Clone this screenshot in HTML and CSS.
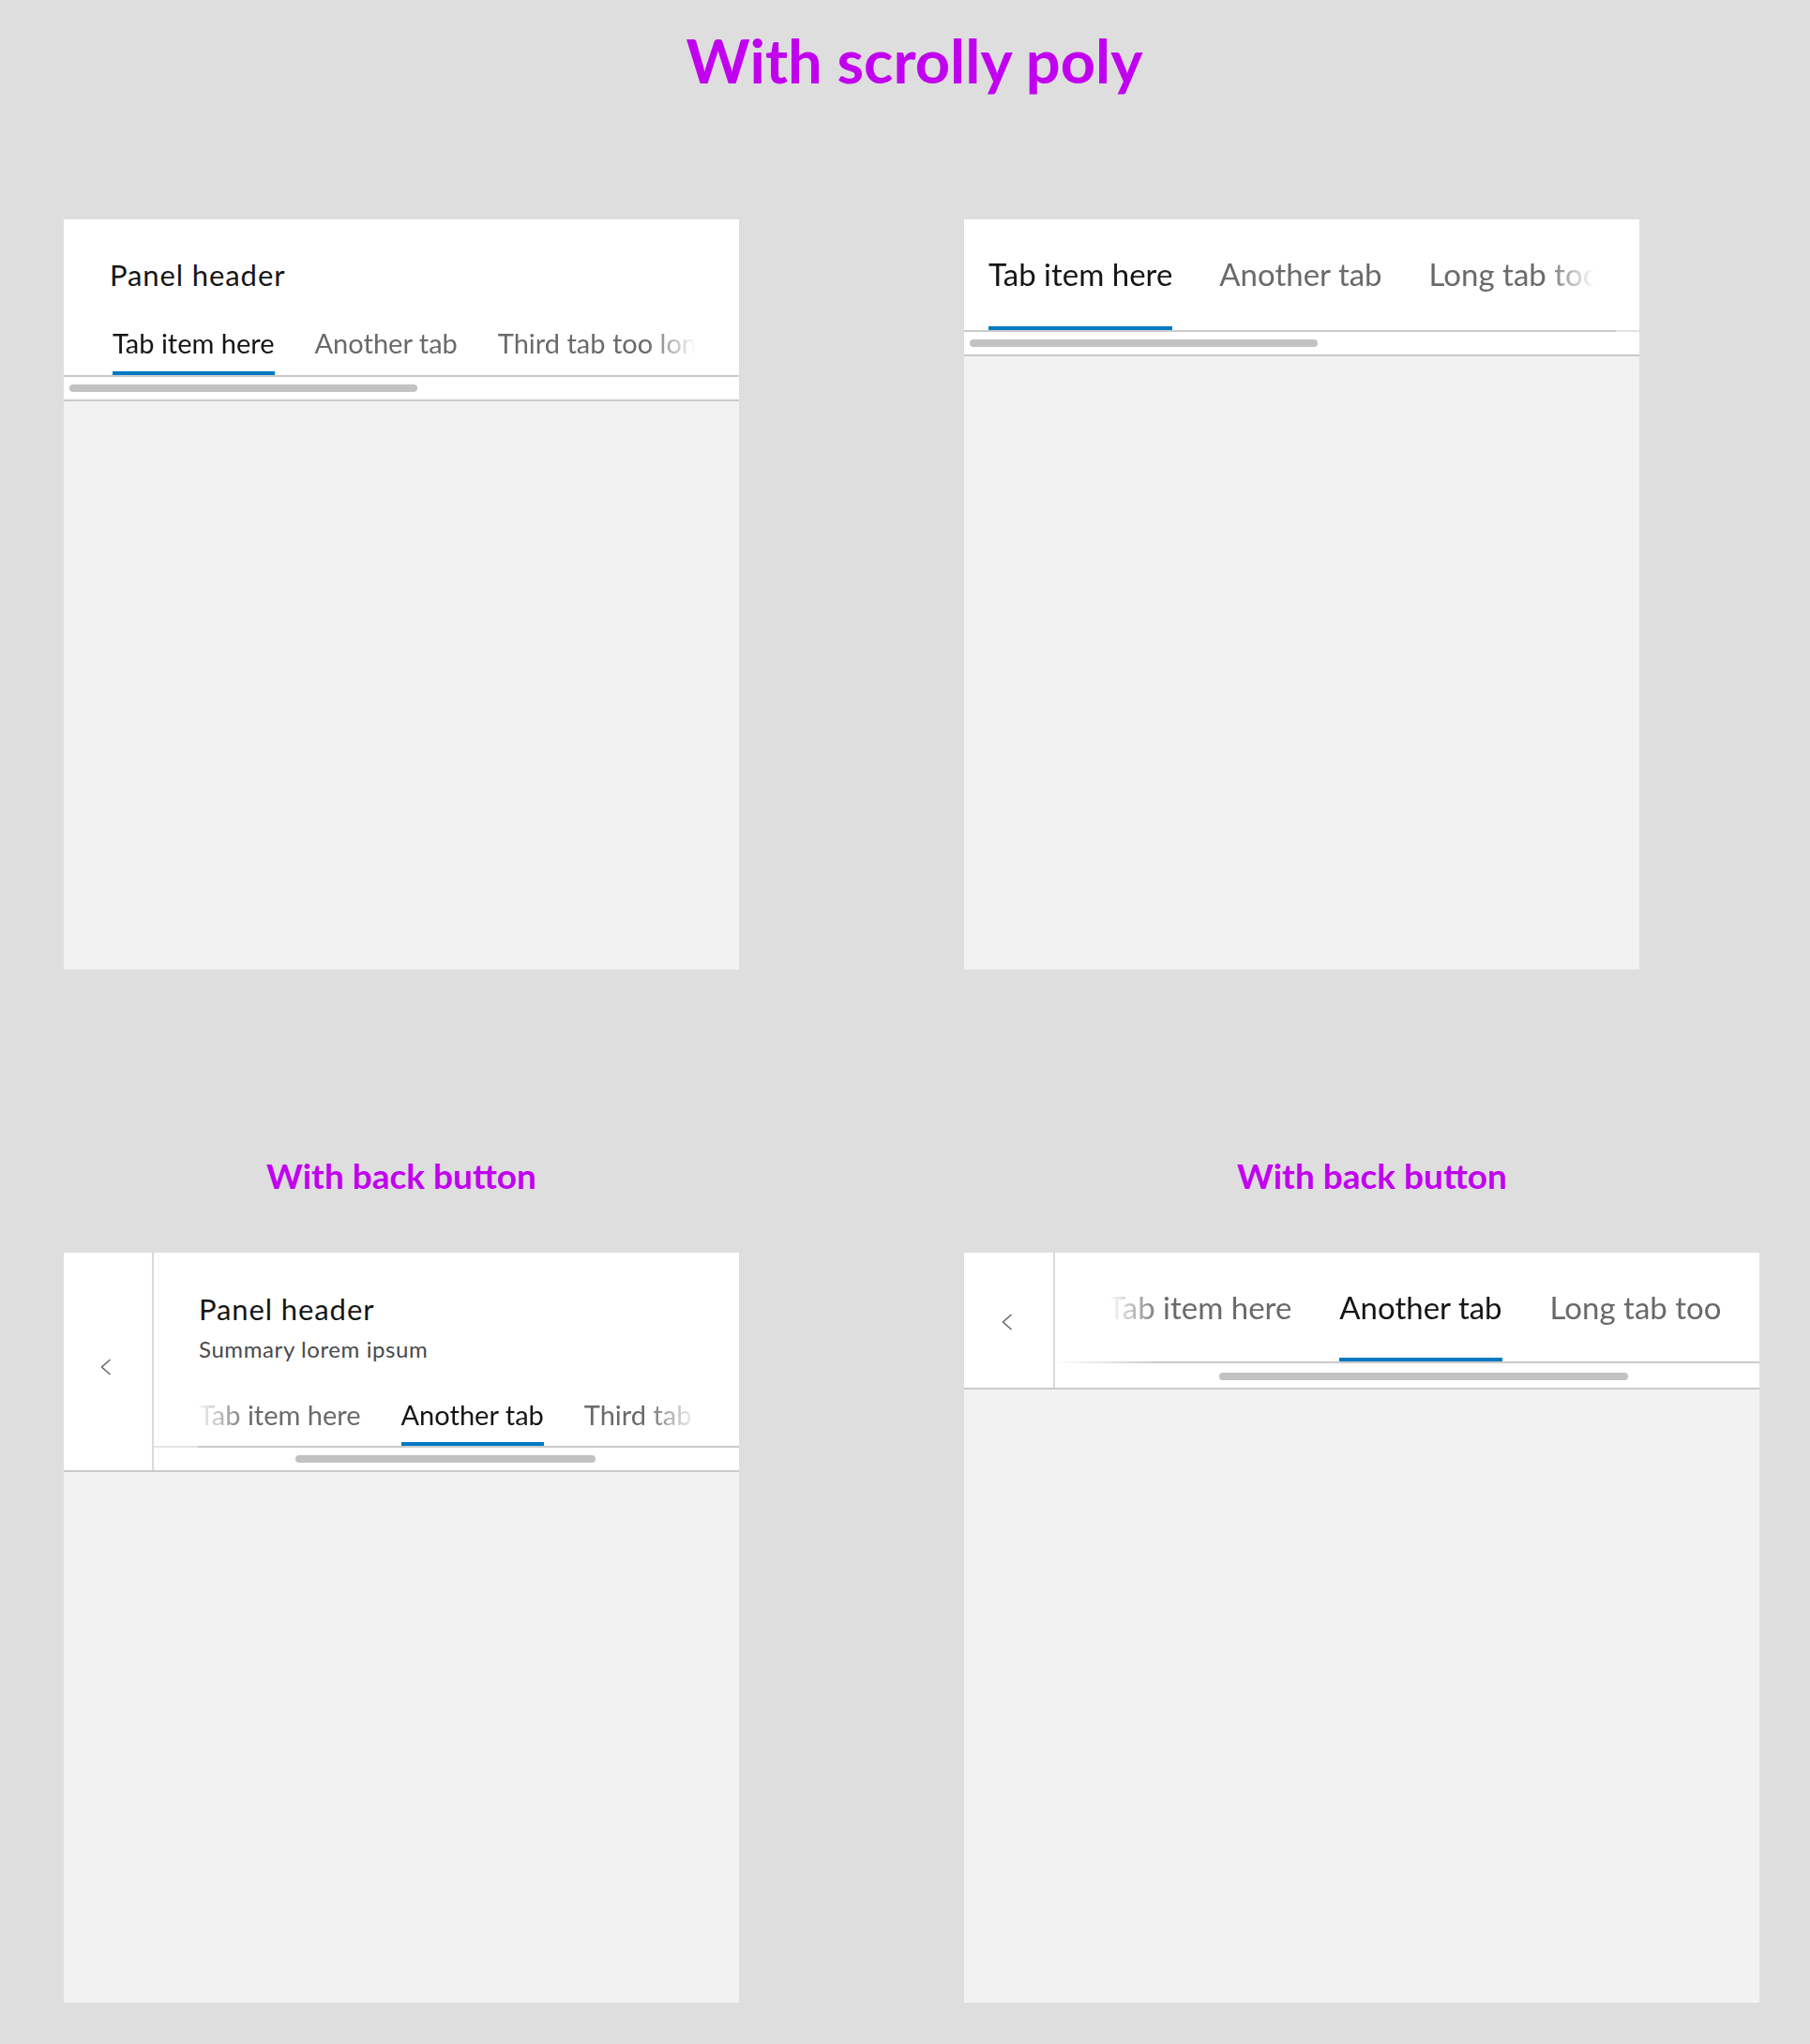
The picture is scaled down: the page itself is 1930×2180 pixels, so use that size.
FILE: index.html
```html
<!DOCTYPE html>
<html lang="en">
<head>
<meta charset="utf-8">
<title>With scrolly poly</title>
<link rel="stylesheet" href="styles.css">
</head>
<body>
<div class="page">
  <h1 class="title">With scrolly poly</h1>
  <div class="grid">
    <div class="cell">
      <div class="panel">
        <div class="panel-head">
          <div class="head-main">
            <div class="heading heading-a">Panel header</div>
            <div class="tabrow tabrow-a">
              <div class="tabs tabs-a">
                <div class="tab tab-sm active">Tab item here</div>
                <div class="tab tab-sm">Another tab</div>
                <div class="tab tab-sm">Third tab too long</div>
              </div>
            </div>
            <div class="scrollbar"><div class="thumb thumb-a"></div></div>
          </div>
        </div>
        <div class="panel-body"></div>
      </div>
    </div>
    <div class="cell">
      <div class="panel">
        <div class="panel-head">
          <div class="head-main">
            <div class="tabrow tabrow-b">
              <div class="tabs tabs-b">
                <div class="tab tab-lg tab-b active">Tab item here</div>
                <div class="tab tab-lg tab-b">Another tab</div>
                <div class="tab tab-lg tab-b">Long tab too</div>
              </div>
            </div>
            <div class="scrollbar"><div class="thumb thumb-a"></div></div>
          </div>
        </div>
        <div class="panel-body"></div>
      </div>
    </div>
    <div class="cell">
      <h2 class="subtitle">With back button</h2>
      <div class="panel">
        <div class="panel-head">
          <div class="back back-c">
            <svg class="chev" width="16" height="18" viewBox="0 0 16 18"><polyline points="10.5,1 1.5,9 10.5,17" fill="none" stroke="#6a6a6a" stroke-width="1.6"/></svg>
          </div>
          <div class="head-main">
            <div class="heading heading-c">Panel header</div>
            <div class="summary">Summary lorem ipsum</div>
            <div class="tabrow tabrow-c">
              <div class="tabs tabs-c">
                <div class="tab tab-sm tab-c">Tab item here</div>
                <div class="tab tab-sm tab-c active">Another tab</div>
                <div class="tab tab-sm tab-c">Third tab too long</div>
              </div>
            </div>
            <div class="scrollbar"><div class="thumb thumb-c"></div></div>
          </div>
        </div>
        <div class="panel-body"></div>
      </div>
    </div>
    <div class="cell">
      <h2 class="subtitle subtitle-shift">With back button</h2>
      <div class="panel panel-wide">
        <div class="panel-head">
          <div class="back back-d">
            <svg class="chev" width="16" height="18" viewBox="0 0 16 18"><polyline points="10.5,1 1.5,9 10.5,17" fill="none" stroke="#6a6a6a" stroke-width="1.6"/></svg>
          </div>
          <div class="head-main">
            <div class="tabrow tabrow-d">
              <div class="tabs tabs-d">
                <div class="tab tab-lg tab-d">Tab item here</div>
                <div class="tab tab-lg tab-d active">Another tab</div>
                <div class="tab tab-lg tab-d">Long tab too</div>
              </div>
            </div>
            <div class="scrollbar scrollbar-d"><div class="thumb thumb-d"></div></div>
          </div>
        </div>
        <div class="panel-body"></div>
      </div>
    </div>
  </div>
</div>
</body>
</html>
```
FILE: styles.css
```css
* { box-sizing: border-box; }
html, body { margin: 0; padding: 0; }
body {
  background: #dedede;
  font-family: Lato, "Noto Sans", sans-serif;
  width: 1930px;
  height: 2180px;
  overflow: hidden;
}
.page { padding: 24px 48px 0 68px; }
.title {
  margin: 0;
  font-size: 65px;
  line-height: 80px;
  font-weight: 700;
  color: #c100ef;
  text-align: center;
}
.grid {
  margin-top: 130px;
  display: grid;
  grid-template-columns: 720px 848px;
  column-gap: 240px;
  align-items: start;
}
.subtitle {
  margin: 197px 0 59px;
  font-size: 37px;
  line-height: 46px;
  font-weight: 700;
  color: #c100ef;
  text-align: center;
}
.subtitle-shift { padding-left: 22px; }

.panel {
  width: 720px;
  height: 800px;
  background: #f2f2f2;
  display: flex;
  flex-direction: column;
}
.panel-wide { width: 848px; }
.panel-head {
  background: #fff;
  border-bottom: 2px solid #cacaca;
  display: flex;
}
.panel-body { flex: 1; }

.back {
  border-right: 2px solid #dadada;
  display: flex;
  align-items: center;
  justify-content: center;
  flex: none;
}
.back-c { width: 96px; padding-top: 12px; }
.back-d { width: 97px; padding-top: 4px; }
.chev { display: block; }

.head-main { flex: 1; min-width: 0; display: flex; flex-direction: column; }

.heading {
  font-size: 31px;
  line-height: 36px;
  letter-spacing: 0.9px;
  color: #151515;
}
.heading-a { padding: 41px 0 0 49px; }
.heading-c { padding: 42px 0 0 48px; }
.summary {
  margin-top: 11px;
  padding-left: 48px;
  font-size: 24px;
  line-height: 28px;
  letter-spacing: 0.6px;
  color: #4a4a4a;
}

.tabrow { border-bottom: 2px solid #cacaca; }
.tabrow-b {
  border-image: linear-gradient(to right, #cacaca calc(100% - 26px), #e2e2e2 calc(100% - 26px)) 1;
}
.tabrow-c {
  border-image: linear-gradient(to right, #e4e4e4 48px, #cacaca 48px) 1;
}
.tabrow-d {
  border-image: linear-gradient(to right, #ffffff 0, #cacaca 110px) 1;
}

.tabs {
  display: flex;
  white-space: nowrap;
  overflow: hidden;
}
.tabs-a {
  padding-left: 52px;
  margin-right: 46px;
  gap: 43px;
  -webkit-mask-image: linear-gradient(to right, #000 calc(100% - 52px), transparent 100%);
  mask-image: linear-gradient(to right, #000 calc(100% - 52px), transparent 100%);
}
.tabs-b {
  padding-left: 26px;
  margin-right: 48px;
  gap: 50px;
  -webkit-mask-image: linear-gradient(to right, #000 calc(100% - 52px), transparent 100%);
  mask-image: linear-gradient(to right, #000 calc(100% - 52px), transparent 100%);
}
.tabs-c {
  padding-left: 48px;
  gap: 43px;
  -webkit-mask-image: linear-gradient(to right, transparent 44px, #000 104px, #000 calc(100% - 100px), transparent calc(100% - 43px));
  mask-image: linear-gradient(to right, transparent 44px, #000 104px, #000 calc(100% - 100px), transparent calc(100% - 43px));
}
.tabs-d {
  padding-left: 56px;
  gap: 51px;
  -webkit-mask-image: linear-gradient(to right, transparent 58px, #000 116px);
  mask-image: linear-gradient(to right, transparent 58px, #000 116px);
}

.tab {
  flex: none;
  color: #6a6a6a;
  border-bottom: 4px solid transparent;
}
.tab.active { color: #151515; border-bottom-color: #007ac2; }
.tab-sm {
  font-size: 29px;
  line-height: 34px;
  padding: 38px 0 13px;
}
.tab-c { padding: 39px 0 12px; }
.tab-lg {
  font-size: 33px;
  line-height: 40px;
}
.tab-b { padding: 38px 0 36px; }
.tab-d { padding: 38px 0 34px; }

.scrollbar { height: 24px; padding-top: 8px; }
.scrollbar-d { height: 26px; padding-top: 10px; }
.thumb { height: 8px; border-radius: 4px; background: #c2c2c2; }
.thumb-a { margin-left: 6px; width: 371px; }
.thumb-c { margin-left: 151px; width: 320px; }
.thumb-d { margin-left: 175px; width: 436px; }
```
